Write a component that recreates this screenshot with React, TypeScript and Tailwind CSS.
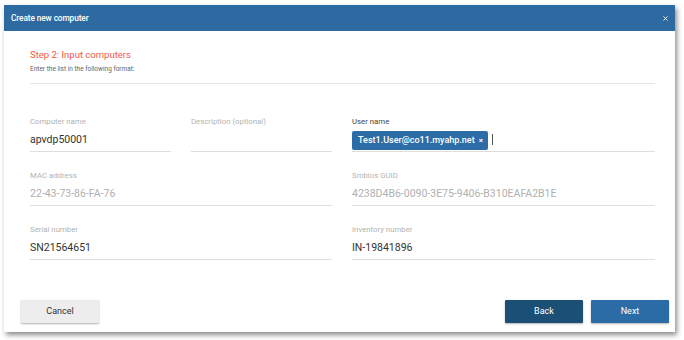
import { X } from "lucide-react";

type Field = {
  label: string;
  value: string;
  muted?: boolean;
  span?: string;
};

const rows: Field[][] = [
  [
    { label: "Computer name", value: "apvdp50001" },
    { label: "Description (optional)", value: "" },
  ],
  [{ label: "MAC address", value: "22-43-73-86-FA-76", muted: true, span: "col-span-2" }],
  [{ label: "Serial number", value: "SN21564651", span: "col-span-2" }],
];

const rightFields: Field[] = [
  { label: "Smbios GUID", value: "4238D4B6-0090-3E75-9406-B310EAFA2B1E", muted: true },
  { label: "Inventory number", value: "IN-19841896" },
];

const FieldBox = ({ field }: { field: Field }) => (
  <div className={field.span}>
    <div className="text-[7.8px] leading-[10px] text-[#b3b3b3]">{field.label}</div>
    <div
      className={`mt-[5px] h-[20px] border-b border-[#dedede] text-[10.5px] leading-[16px] ${
        field.muted ? "text-[#b0b0b0]" : "text-[#333]"
      }`}
    >
      {field.value}
    </div>
  </div>
);

const App = () => {
  return (
    <div className="w-[684px] h-[340px] bg-white pl-[4px] pt-[5px] font-['Roboto',sans-serif]">
      <div className="w-[671px] h-[327px] bg-white flex flex-col shadow-[2px_3px_5px_rgba(0,0,0,0.45)]">
        {/* header */}
        <div className="h-[26px] bg-[#2d6aa1] flex items-center justify-between pl-[7px] pr-[6px]">
          <span className="text-white text-[8.3px] font-medium tracking-[-0.1px]">Create new computer</span>
          <X className="w-[7px] h-[7px] text-white" strokeWidth={3} />
        </div>

        <div className="flex-1 flex flex-col pl-[26px] pr-[20px]">
          <div className="mt-[17px] text-[9.5px] leading-[14px] text-[#f4574a]">Step 2: Input computers</div>
          <div className="mt-[2px] text-[6.5px] leading-[10px] text-[#666]">
            Enter the list in the following format:
          </div>
          <div className="mt-[9px] border-b border-[#e6e6e6]" />

          <div className="mt-[33px] grid grid-cols-[303px_303px] gap-x-[19px]">
            <div className="flex flex-col gap-y-[19px]">
              {rows.map((row, i) => (
                <div key={i} className="grid grid-cols-[141px_141px] gap-x-[20px]">
                  {row.map((f) => (
                    <FieldBox key={f.label} field={f} />
                  ))}
                </div>
              ))}
            </div>
            <div className="flex flex-col gap-y-[19px]">
              <div>
                <div className="text-[7.8px] leading-[10px] text-[#444]">User name</div>
                <div className="mt-[2px] h-[23px] border-b border-[#dedede] flex items-start">
                  <span className="mt-[2px] h-[19px] flex items-center gap-[4px] rounded-[2px] bg-[#2c6ca7] pl-[6px] pr-[5px] text-white text-[9px] font-medium">
                    Test1.User@co11.myahp.net
                    <span className="text-[8px]">×</span>
                  </span>
                  <span className="ml-[4px] mt-[5px] w-[1px] h-[11px] bg-[#555]" />
                </div>
              </div>
              {rightFields.map((f) => (
                <FieldBox key={f.label} field={f} />
              ))}
            </div>
          </div>
        </div>

        {/* footer */}
        <div className="flex items-center justify-between pl-[17px] pr-[6px] pb-[9px]">
          <button className="w-[78px] h-[23px] bg-[#ededed] text-[#333] text-[9px] rounded-[1px] shadow-[0_1px_2px_rgba(0,0,0,0.3)]">
            Cancel
          </button>
          <div className="flex gap-[8px]">
            <button className="w-[78px] h-[23px] bg-[#1b4f76] text-white text-[9px] rounded-[1px] shadow-[0_1px_2px_rgba(0,0,0,0.3)]">
              Back
            </button>
            <button className="w-[78px] h-[23px] bg-[#2c6ca6] text-white text-[9px] rounded-[1px] shadow-[0_1px_2px_rgba(0,0,0,0.3)]">
              Next
            </button>
          </div>
        </div>
      </div>
    </div>
  );
};

export default App;
